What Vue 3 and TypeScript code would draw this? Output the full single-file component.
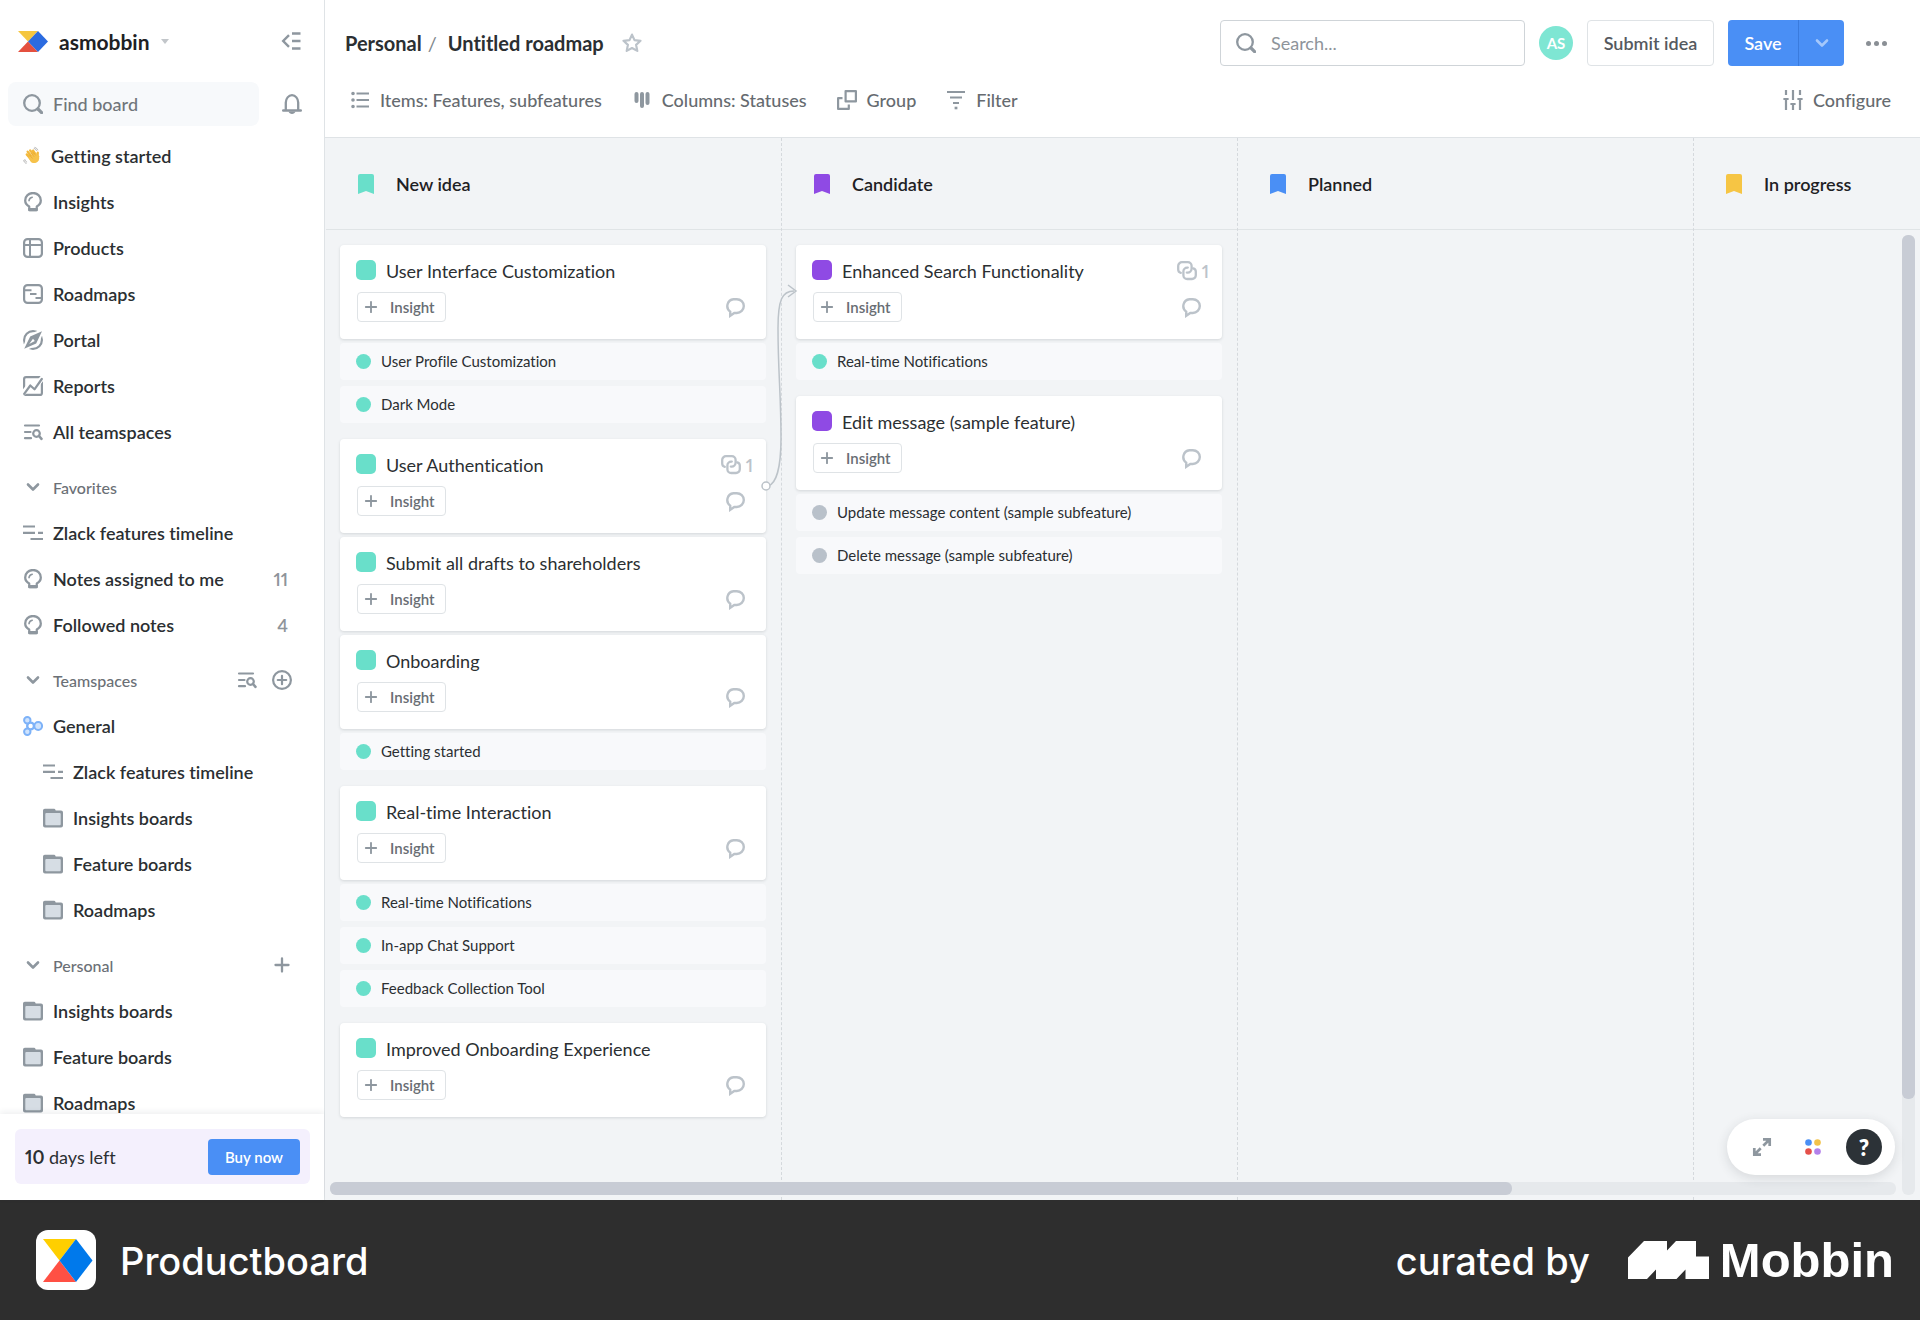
<script setup lang="ts">
interface NavItem {
  label: string
  icon: string
  count?: number
  nested?: boolean
}

interface NavSection {
  title: string
  items: NavItem[]
  actions: { icon: string; label: string }[]
}

interface Feature {
  title: string
  links?: number
  subs: { title: string; tone: string }[]
}

interface Column {
  name: string
  tone: string
  features: Feature[]
}

const mainNav: NavItem[] = [
  { label: 'Getting started', icon: 'wave' },
  { label: 'Insights', icon: 'bulb' },
  { label: 'Products', icon: 'products' },
  { label: 'Roadmaps', icon: 'roadmap' },
  { label: 'Portal', icon: 'portal' },
  { label: 'Reports', icon: 'reports' },
  { label: 'All teamspaces', icon: 'list-search' },
]

const sections: NavSection[] = [
  {
    title: 'Favorites',
    actions: [],
    items: [
      { label: 'Zlack features timeline', icon: 'timeline' },
      { label: 'Notes assigned to me', icon: 'bulb', count: 11 },
      { label: 'Followed notes', icon: 'bulb', count: 4 },
    ],
  },
  {
    title: 'Teamspaces',
    actions: [
      { icon: 'list-search', label: 'Browse teamspaces' },
      { icon: 'plus-circle', label: 'Add teamspace' },
    ],
    items: [
      { label: 'General', icon: 'general' },
      { label: 'Zlack features timeline', icon: 'timeline', nested: true },
      { label: 'Insights boards', icon: 'folder', nested: true },
      { label: 'Feature boards', icon: 'folder', nested: true },
      { label: 'Roadmaps', icon: 'folder', nested: true },
    ],
  },
  {
    title: 'Personal',
    actions: [{ icon: 'plus', label: 'Add board' }],
    items: [
      { label: 'Insights boards', icon: 'folder' },
      { label: 'Feature boards', icon: 'folder' },
      { label: 'Roadmaps', icon: 'folder' },
    ],
  },
]

const tools = [
  { label: 'Items: Features, subfeatures', icon: 'items' },
  { label: 'Columns: Statuses', icon: 'columns' },
  { label: 'Group', icon: 'group' },
  { label: 'Filter', icon: 'filter' },
]

const columns: Column[] = [
  {
    name: 'New idea',
    tone: 'teal',
    features: [
      {
        title: 'User Interface Customization',
        subs: [
          { title: 'User Profile Customization', tone: 'teal' },
          { title: 'Dark Mode', tone: 'teal' },
        ],
      },
      { title: 'User Authentication', links: 1, subs: [] },
      { title: 'Submit all drafts to shareholders', subs: [] },
      { title: 'Onboarding', subs: [{ title: 'Getting started', tone: 'teal' }] },
      {
        title: 'Real-time Interaction',
        subs: [
          { title: 'Real-time Notifications', tone: 'teal' },
          { title: 'In-app Chat Support', tone: 'teal' },
          { title: 'Feedback Collection Tool', tone: 'teal' },
        ],
      },
      { title: 'Improved Onboarding Experience', subs: [] },
    ],
  },
  {
    name: 'Candidate',
    tone: 'purple',
    features: [
      {
        title: 'Enhanced Search Functionality',
        links: 1,
        subs: [{ title: 'Real-time Notifications', tone: 'teal' }],
      },
      {
        title: 'Edit message (sample feature)',
        subs: [
          { title: 'Update message content (sample subfeature)', tone: 'grey' },
          { title: 'Delete message (sample subfeature)', tone: 'grey' },
        ],
      },
    ],
  },
  { name: 'Planned', tone: 'blue', features: [] },
  { name: 'In progress', tone: 'yellow', features: [] },
]
</script>

<template>
  <svg class="sprite" aria-hidden="true">
    <symbol id="i-wave" viewBox="0 0 20 20">
      <g fill="none" stroke="#f3b93c" stroke-width="2.6" stroke-linecap="round">
        <path d="M4.2 8.2l5 6M5.2 5.3l6 7.2M8 3.8l5.2 6.6M11.2 4l4 6" />
        <path d="M16.4 6.4c-.3 1.6-.4 3 .2 4.6" />
      </g>
      <path d="M5.8 11.6L14.6 7l3.2 3.4c.8 3.6-.6 6-3.2 7-2.6.9-4.8.4-6.2-1.4z" fill="#f6c24a" />
      <path d="M7 8.6l3.6 4.2M9 6.8l3.4 4M11.4 6l2.8 3.4" stroke="#dc9a2a" stroke-width=".6" fill="none" />
      <path d="M12 1.600c1.600.3 2.600 1.200 3 2.600M12.800.4c1.900.4 3.200 1.600 3.700 3.300M2 13.600c.2 1.600 1 2.700 2.500 3.200M.8 14.600c.3 1.900 1.300 3.100 3 3.700" stroke="#a9a9a9" stroke-width="1" fill="none" />
    </symbol>
    <symbol id="i-bulb" viewBox="0 0 20 20">
      <path d="M6.200 18.200v-3.700C3.700 13 2.200 10.800 2.200 8.400a7.800 7.400 0 0 1 15.600 0c0 2.400-1.500 4.600-4 6.100v3.700z" fill="none" stroke="currentColor" stroke-width="2.300" stroke-linejoin="round" />
      <path d="M6.400 17.600h7.200" stroke="currentColor" stroke-width="3.200" />
      <path d="M6 8.600a4 4 0 0 1 3.200-3.400" fill="none" stroke="currentColor" stroke-width="1.600" stroke-linecap="round" />
    </symbol>
    <symbol id="i-products" viewBox="0 0 20 20">
      <rect x="1.100" y="1.100" width="17.800" height="17.800" rx="3.500" fill="none" stroke="currentColor" stroke-width="2.200" />
      <path d="M1 7h18M7 1v18" stroke="currentColor" stroke-width="2" />
    </symbol>
    <symbol id="i-roadmap" viewBox="0 0 20 20">
      <rect x="1.100" y="1.100" width="17.800" height="17.800" rx="3.500" fill="none" stroke="currentColor" stroke-width="2.200" />
      <path d="M1 6.200h7.500M7 10h6.500M12.500 14H19" stroke="currentColor" stroke-width="2" />
    </symbol>
    <symbol id="i-portal" viewBox="0 0 20 20">
      <circle cx="10" cy="10" r="8.900" fill="none" stroke="currentColor" stroke-width="2.200" />
      <path d="M19.500.5L6 6 .5 19.500 14 14z" fill="#fff" stroke="#fff" stroke-width="3" />
      <path fill-rule="evenodd" d="M19 1.200L7.200 6.500 1.200 18.800 13.200 13.600zM10 8.800l1.800 2.300-5.600 3z" fill="currentColor" />
    </symbol>
    <symbol id="i-reports" viewBox="0 0 20 20">
      <rect x="1.100" y="1.100" width="17.800" height="17.800" rx="2" fill="none" stroke="currentColor" stroke-width="2.200" />
      <path d="M-.5 18L7.500 8l3.800 4L20.500.5" fill="none" stroke="#fff" stroke-width="5" />
      <path d="M1.200 17.800L7.300 9.500l4.200 3.800L18.800 3" fill="none" stroke="currentColor" stroke-width="2.200" stroke-linecap="round" stroke-linejoin="round" />
    </symbol>
    <symbol id="i-list-search" viewBox="0 0 20 20">
      <path d="M2 3.500h14M2 10h5.500M2 16.200h6" stroke="currentColor" stroke-width="2.200" stroke-linecap="round" />
      <circle cx="13.500" cy="11.500" r="3.300" fill="none" stroke="currentColor" stroke-width="2.200" />
      <path d="M16 14l2.500 2.800" stroke="currentColor" stroke-width="2.600" stroke-linecap="round" />
    </symbol>
    <symbol id="i-timeline" viewBox="0 0 20 20">
      <path d="M0 3.500h12M0 9.800h12M15 9.800h5M7.500 16H20" stroke="currentColor" stroke-width="2.200" />
    </symbol>
    <symbol id="i-folder" viewBox="0 0 20 20">
      <path d="M0 2.500A1.800 1.800 0 0 1 1.800.7h8.900c.9 0 1.300.3 1.700 1.100l.3.700H18a2 2 0 0 1 2 2v13a2 2 0 0 1-2 2H2a2 2 0 0 1-2-2z" fill="currentColor" />
      <rect x="2.300" y="5" width="15.400" height="12.200" rx="1" fill="#d6dde4" />
    </symbol>
    <symbol id="i-general" viewBox="0 0 20 20">
      <g fill="#cfe3fd" stroke="#7db2f8" stroke-width="2">
        <circle cx="7.600" cy="10" r="3.400" fill="#fff" stroke-width="2.400" />
        <circle cx="4.300" cy="4.200" r="3.200" />
        <circle cx="4.300" cy="15.800" r="3.200" />
        <circle cx="15.200" cy="10" r="3.900" />
      </g>
    </symbol>
    <symbol id="i-plus-circle" viewBox="0 0 20 20">
      <circle cx="10" cy="10" r="8.900" fill="none" stroke="currentColor" stroke-width="2.200" />
      <path d="M10 5.800v8.400M5.800 10h8.400" stroke="currentColor" stroke-width="2.200" stroke-linecap="round" />
    </symbol>
    <symbol id="i-plus" viewBox="0 0 20 20">
      <path d="M10 3.500v13M3.500 10h13" stroke="currentColor" stroke-width="2.300" stroke-linecap="round" />
    </symbol>
    <symbol id="i-chevron" viewBox="0 0 20 20">
      <path d="M5 7.500l5 5 5-5" fill="none" stroke="currentColor" stroke-width="2.600" stroke-linecap="round" stroke-linejoin="round" />
    </symbol>
    <symbol id="i-search" viewBox="0 0 20 20">
      <circle cx="9" cy="9" r="7.800" fill="none" stroke="currentColor" stroke-width="2.300" />
      <path d="M15 15l3.600 3.600" stroke="currentColor" stroke-width="3.200" stroke-linecap="round" />
    </symbol>
    <symbol id="i-bell" viewBox="0 0 20 20">
      <path d="M3.800 16V8.600a6.200 7.400 0 0 1 12.400 0V16" fill="none" stroke="currentColor" stroke-width="2.300" />
      <path d="M1.200 16.500h17.600" stroke="currentColor" stroke-width="2.400" stroke-linecap="round" />
      <path d="M6.500 17.500h7c-.5 1.600-1.800 2.500-3.500 2.500s-3-.9-3.500-2.500z" fill="currentColor" />
    </symbol>
    <symbol id="i-collapse" viewBox="0 0 20 20">
      <path d="M11 2.500h8.500M11 10h8.500M11 17.500h8.500" stroke="currentColor" stroke-width="2.300" />
      <path d="M8 4.200L2.200 10 8 15.800" fill="none" stroke="currentColor" stroke-width="2.400" />
    </symbol>
    <symbol id="i-star" viewBox="0 0 20 20">
      <path d="M10 1.600l2.500 5.500 6 .7-4.400 4.100 1.200 6L10 15l-5.300 2.900 1.200-6L1.500 7.800l6-.7z" fill="none" stroke="currentColor" stroke-width="2.200" stroke-linejoin="round" />
    </symbol>
    <symbol id="i-items" viewBox="0 0 20 20">
      <path d="M6.500 3.500H19M6.500 10H19M6.500 16.500H19" stroke="currentColor" stroke-width="2.200" />
      <path d="M3 3.500h.01M3 10h.01M3 16.500h.01" stroke="currentColor" stroke-width="3.600" stroke-linecap="round" />
    </symbol>
    <symbol id="i-columns" viewBox="0 0 20 20">
      <path d="M4.500 4v7M10 4v12M15.500 4v9" stroke="currentColor" stroke-width="4" stroke-linecap="round" />
    </symbol>
    <symbol id="i-group" viewBox="0 0 20 20">
      <path d="M8.600 1.100h10.300v10.300H8.600zM5.500 8.200H1.100v10.700h10.700v-4.400" fill="none" stroke="currentColor" stroke-width="2.200" stroke-linejoin="round" />
    </symbol>
    <symbol id="i-filter" viewBox="0 0 20 20">
      <path d="M1 2h18M4 7.500h12M7 13h6" stroke="currentColor" stroke-width="2.200" />
      <path d="M8.600 18h2.800" stroke="currentColor" stroke-width="2.600" />
    </symbol>
    <symbol id="i-configure" viewBox="0 0 20 20">
      <path d="M3 0v5M10 0v10M17 0v5M3 9v11M10 14v6M17 9v11" stroke="currentColor" stroke-width="2.200" />
      <path d="M.4 9h5.200M7.400 14h5.200M14.400 9h5.200" stroke="currentColor" stroke-width="2.200" />
    </symbol>
    <symbol id="i-comment" viewBox="0 0 20 20">
      <path d="M8.500 1.200h3.300a7 6.900 0 0 1 0 13.800H9.300L5.200 17.800v-4.200A7 6.900 0 0 1 8.500 1.200z" fill="none" stroke="currentColor" stroke-width="2.400" stroke-linejoin="miter" />
    </symbol>
    <symbol id="i-link" viewBox="0 0 20 20">
      <g fill="none" stroke="currentColor" stroke-width="2.300" stroke-linecap="round">
        <path d="M3.800 11.800A3.400 3.400 0 0 1 1.200 8.500V5A3.800 3.800 0 0 1 5 1.200h5.800A3.800 3.800 0 0 1 14.600 5v2.600a4 4 0 0 1-4 4H9.800" />
        <path d="M16.200 7.300A3.400 3.400 0 0 1 18.800 10.600v3.600A3.800 3.800 0 0 1 15 18h-4.800a3.800 3.800 0 0 1-3.800-3.800v-3.800a3.800 3.800 0 0 1 3.800-3.800h.6" />
      </g>
    </symbol>
    <symbol id="i-expand" viewBox="0 0 20 20">
      <path d="M11 2.300h6.700V9M17.500 2.500l-6.200 6.200M9 17.700H2.300V11M2.500 17.500l6.200-6.200" fill="none" stroke="currentColor" stroke-width="2.700" />
    </symbol>
  </svg>

  <div class="page">
    <div class="shell">
      <aside class="sidebar">
        <div class="workspace">
          <button class="workspace-name" type="button">
            <svg class="logo" viewBox="0 0 30 21" aria-hidden="true">
              <path d="M0 0h20L10 10.500z" fill="#f5c63f" />
              <path d="M0 21h20L10 10.500z" fill="#e4503f" />
              <path d="M20 0l10 10.500L20 21 10 10.500z" fill="#2b6be0" />
            </svg>
            <span>asmobbin</span>
            <i class="caret"></i>
          </button>
          <button class="icon-btn" type="button" aria-label="Collapse sidebar">
            <svg class="icon"><use href="#i-collapse" /></svg>
          </button>
        </div>

        <div class="find-row">
          <label class="find">
            <svg class="icon"><use href="#i-search" /></svg>
            <input type="text" placeholder="Find board" aria-label="Find board" />
          </label>
          <button class="icon-btn" type="button" aria-label="Notifications">
            <svg class="icon"><use href="#i-bell" /></svg>
          </button>
        </div>

        <nav class="nav">
          <a v-for="item in mainNav" :key="item.label" class="nav-item" href="#">
            <svg class="icon" :class="{ emoji: item.icon === 'wave' }"><use :href="'#i-' + item.icon" /></svg>
            <span>{{ item.label }}</span>
          </a>
          <section v-for="section in sections" :key="section.title" class="nav-section">
            <header class="nav-head">
              <svg class="icon"><use href="#i-chevron" /></svg>
              <h2>{{ section.title }}</h2>
              <button v-for="action in section.actions" :key="action.icon" class="icon-btn" type="button" :aria-label="action.label">
                <svg class="icon"><use :href="'#i-' + action.icon" /></svg>
              </button>
            </header>
            <a v-for="item in section.items" :key="item.label" class="nav-item" :class="{ nested: item.nested }" href="#">
              <svg class="icon"><use :href="'#i-' + item.icon" /></svg>
              <span>{{ item.label }}</span>
              <span v-if="item.count" class="count">{{ item.count }}</span>
            </a>
          </section>
        </nav>

        <div class="trial">
          <div class="trial-box">
            <span><strong>10</strong> days left</span>
            <button class="buy" type="button">Buy now</button>
          </div>
        </div>
      </aside>

      <main class="main">
        <header class="top">
          <div class="title-row">
            <h1 class="crumbs">
              <a href="#">Personal</a><span class="slash">/</span><span>Untitled roadmap</span>
            </h1>
            <button class="icon-btn star" type="button" aria-label="Add to favorites">
              <svg class="icon"><use href="#i-star" /></svg>
            </button>
            <label class="search">
              <svg class="icon"><use href="#i-search" /></svg>
              <input type="text" placeholder="Search..." aria-label="Search" />
            </label>
            <span class="avatar">AS</span>
            <button class="submit" type="button">Submit idea</button>
            <div class="save">
              <button type="button">Save</button>
              <button class="save-more" type="button" aria-label="More save options">
                <svg class="icon"><use href="#i-chevron" /></svg>
              </button>
            </div>
            <button class="more" type="button" aria-label="More"><i></i><i></i><i></i></button>
          </div>
          <div class="tool-row">
            <button v-for="tool in tools" :key="tool.icon" class="tool" type="button">
              <svg class="icon"><use :href="'#i-' + tool.icon" /></svg>
              <span>{{ tool.label }}</span>
            </button>
            <button class="tool configure" type="button">
              <svg class="icon"><use href="#i-configure" /></svg>
              <span>Configure</span>
            </button>
          </div>
        </header>

        <div class="board">
          <section v-for="column in columns" :key="column.name" class="column">
            <header class="column-head">
              <svg class="flag" :class="column.tone" viewBox="0 0 16 20" aria-hidden="true">
                <path d="M2 0h12a2 2 0 0 1 2 2v18l-8-3-8 3V2a2 2 0 0 1 2-2z" fill="currentColor" />
              </svg>
              <h2>{{ column.name }}</h2>
            </header>
            <div class="cards">
              <div v-for="feature in column.features" :key="feature.title" class="group" :class="{ 'has-subs': feature.subs.length }">
                <article class="card">
                  <div class="card-top">
                    <i class="swatch" :class="column.tone"></i>
                    <h3>{{ feature.title }}</h3>
                    <span v-if="feature.links" class="links">
                      <svg class="icon"><use href="#i-link" /></svg>{{ feature.links }}
                    </span>
                  </div>
                  <div class="card-bottom">
                    <button class="insight" type="button">
                      <svg class="icon"><use href="#i-plus" /></svg>
                      <span>Insight</span>
                    </button>
                    <button class="icon-btn comment" type="button" aria-label="Comments">
                      <svg class="icon"><use href="#i-comment" /></svg>
                    </button>
                  </div>
                </article>
                <ul v-if="feature.subs.length" class="subs">
                  <li v-for="sub in feature.subs" :key="sub.title">
                    <i class="dot" :class="sub.tone"></i>
                    <span>{{ sub.title }}</span>
                  </li>
                </ul>
              </div>
            </div>
          </section>

          <svg class="connector" viewBox="0 0 48 216" fill="none" stroke="#bcc3c9" aria-hidden="true">
            <path d="M13 207c8-2 13-18 13-48 0-44-3-66-3-110 0-28 4-37 16-37" stroke-width="1.500" />
            <path d="M33 6l8 6-8 6" stroke-width="1.500" />
            <circle cx="11" cy="207" r="4" fill="#fff" stroke-width="1.500" />
          </svg>

          <div class="bar bar-y"><i></i></div>
          <div class="bar bar-x"><i></i></div>

          <div class="dock">
            <button class="icon-btn" type="button" aria-label="Full screen">
              <svg class="icon"><use href="#i-expand" /></svg>
            </button>
            <button class="icon-btn colors" type="button" aria-label="Color palette">
              <svg class="palette" viewBox="0 0 16 16">
                <circle cx="3.500" cy="3.500" r="3.300" fill="#4a8ff5" />
                <circle cx="12.500" cy="3.500" r="3.300" fill="#f2c24a" />
                <circle cx="3.500" cy="12.500" r="3.300" fill="#e5504a" />
                <circle cx="12.500" cy="12.500" r="3.300" fill="#b381ea" />
              </svg>
            </button>
            <button class="help" type="button" aria-label="Help">?</button>
          </div>
        </div>
      </main>
    </div>

    <footer class="credit">
      <svg class="app-logo" viewBox="0 0 60 60" aria-hidden="true">
        <rect width="60" height="60" rx="12" fill="#fff" />
        <path d="M7 9h33L23.500 30.500z" fill="#ffcf00" />
        <path d="M7 52h33L23.500 30.500z" fill="#ff5044" />
        <path d="M40 9l16.500 21.500L40 52 23.500 30.500z" fill="#0079eb" />
      </svg>
      <span class="app-name">Productboard</span>
      <span class="by">curated by</span>
      <svg class="mobbin-mark" viewBox="0 0 81 38" aria-hidden="true">
        <path d="M0 16.500L16 0h23v9.500L48 0h20v15.500h13V38H57.500V28.500L48.500 38H28V28.500L19 38H0z" fill="#fff" />
      </svg>
      <span class="mobbin">Mobbin</span>
    </footer>
  </div>
</template>

<style>
body {
  margin: 0;
  background: #2e2e2e;
}
</style>

<style scoped>
* {
  box-sizing: border-box;
}
.sprite {
  position: absolute;
  width: 0;
  height: 0;
}
.page {
  display: flex;
  flex-direction: column;
  height: 100vh;
  font-family: Lato, 'Liberation Sans', sans-serif;
  font-size: 18px;
  font-variant-ligatures: none;
  font-variant-numeric: proportional-nums;
  color: #2b2f32;
}
.shell {
  display: flex;
  flex: 1;
  min-height: 0;
  background: #fff;
}
h1,
h2,
h3,
ul {
  margin: 0;
  padding: 0;
  list-style: none;
  font-size: inherit;
  font-weight: inherit;
}
a {
  color: inherit;
  text-decoration: none;
}
button {
  margin: 0;
  padding: 0;
  border: 0;
  background: none;
  font: inherit;
  font-variant: inherit;
  color: inherit;
  white-space: nowrap;
}
input {
  flex: 1;
  min-width: 0;
  padding: 0;
  border: 0;
  outline: 0;
  background: none;
  font: inherit;
}
.icon {
  display: block;
  flex: none;
  width: 20px;
  height: 20px;
  color: #8e979f;
}
.icon-btn {
  flex: none;
}

/* sidebar */
.sidebar {
  display: flex;
  flex-direction: column;
  flex: none;
  width: 325px;
  border-right: 1px solid #dfe3e6;
}
.workspace {
  display: flex;
  align-items: center;
  justify-content: space-between;
  height: 82px;
  padding: 0 23px 0 18px;
}
.workspace-name {
  display: flex;
  align-items: center;
  gap: 11px;
  font-size: 21px;
  font-weight: 700;
  color: #1e2124;
}
.logo {
  width: 30px;
  height: 21px;
}
.caret {
  border: 4px solid transparent;
  border-top: 5px solid #c2c6ca;
  border-bottom: 0;
}
.find-row {
  display: flex;
  align-items: center;
  gap: 23px;
  padding: 0 22px 0 8px;
}
.find {
  display: flex;
  flex: 1;
  align-items: center;
  gap: 10px;
  height: 44px;
  min-width: 0;
  padding: 0 15px;
  border-radius: 8px;
  background: #f7f9fb;
  font-weight: 500;
}
.find input::placeholder {
  color: #70757a;
}
.nav {
  flex: 1;
  min-height: 0;
  padding-top: 7px;
  overflow: hidden;
}
.nav-item,
.nav-head {
  display: flex;
  align-items: center;
  gap: 10px;
  height: 46px;
  padding: 0 36px 0 23px;
}
.nav-item {
  font-weight: 600;
}
.nested {
  padding-left: 43px;
}
.emoji {
  width: 18px;
}
.count {
  margin-left: auto;
  color: #8e949a;
}
.nav-section {
  padding-top: 9px;
}
.nav-head {
  padding-right: 32px;
  font-size: 16px;
  font-weight: 500;
  color: #6b7076;
}
.nav-head h2 {
  flex: 1;
}
.nav-head .icon-btn + .icon-btn {
  margin-left: 5px;
}
.trial {
  position: relative;
  padding: 15px 14px 16px 15px;
  background: #fff;
  box-shadow: 0 -2px 6px rgba(40, 50, 60, 0.08);
}
.trial-box {
  display: flex;
  align-items: center;
  justify-content: space-between;
  height: 55px;
  padding: 0 10px;
  border-radius: 6px;
  background: #f4f0fd;
}
.buy {
  height: 36px;
  width: 92px;
  border-radius: 4px;
  background: #4a8ff5;
  color: #fff;
  font-size: 15px;
  font-weight: 600;
}

/* header */
.main {
  display: flex;
  flex-direction: column;
  flex: 1;
  min-width: 0;
}
.top {
  height: 138px;
  padding: 20px 29px 0 20px;
  border-bottom: 1px solid #dfe3e6;
}
.title-row {
  display: flex;
  align-items: center;
  height: 46px;
  padding-right: 4px;
}
.crumbs {
  font-size: 20px;
  font-weight: 700;
  white-space: nowrap;
}
.slash {
  margin: 0 11px 0 6px;
  font-weight: 400;
  color: #80868c;
}
.star {
  margin: 0 auto 0 18px;
}
.star .icon {
  color: #bcc3ca;
}
.search {
  display: flex;
  align-items: center;
  gap: 15px;
  width: 305px;
  height: 46px;
  padding: 0 15px;
  border: 1px solid #cfd4d8;
  border-radius: 4px;
}
.search input::placeholder {
  color: #8e949a;
}
.avatar {
  width: 34px;
  height: 34px;
  margin: 0 14px;
  border-radius: 50%;
  background: #7ee6d3;
  color: #fff;
  font-size: 15px;
  font-weight: 700;
  line-height: 34px;
  text-align: center;
}
.submit {
  width: 127px;
  height: 46px;
  border: 1px solid #dfe3e6;
  border-radius: 4px;
  font-weight: 600;
  color: #55595e;
}
.save {
  display: flex;
  height: 46px;
  margin: 0 22px 0 14px;
  border-radius: 4px;
  background: #4a8ff5;
  color: #fff;
  font-weight: 600;
}
.save button {
  width: 70px;
}
.save .save-more {
  display: flex;
  align-items: center;
  justify-content: center;
  width: 46px;
  border-left: 1px solid #3a7bdd;
}
.save .icon {
  color: #a5c8fb;
}
.more {
  display: flex;
  gap: 3px;
}
.more i {
  width: 5px;
  height: 5px;
  border-radius: 50%;
  background: #8a8f95;
}
.tool-row {
  display: flex;
  align-items: center;
  gap: 30px;
  height: 68px;
  padding-left: 5px;
}
.tool {
  display: flex;
  align-items: center;
  gap: 10px;
  font-weight: 500;
  color: #666b70;
}
.configure {
  margin-left: auto;
}

/* board */
.board {
  position: relative;
  display: flex;
  flex: 1;
  min-height: 0;
  overflow: hidden;
  background: #f2f4f6;
}
.column {
  flex: none;
  width: 456px;
  border-left: 1px dashed #d5d9dd;
}
.column:first-child {
  border-left-color: transparent;
}
.column-head {
  display: flex;
  align-items: center;
  gap: 22px;
  height: 92px;
  padding-left: 32px;
  border-bottom: 1px solid #e0e4e6;
  font-weight: 600;
  color: #1e2124;
}
.flag {
  width: 16px;
  height: 20px;
}
.teal {
  color: #69dfca;
}
.purple {
  color: #8f4ae4;
}
.blue {
  color: #4a8ff5;
}
.yellow {
  color: #f6c544;
}
.grey {
  color: #b9c1ca;
}
.cards {
  padding: 15px 15px 0 14px;
}
.group {
  margin-bottom: 4px;
}
.has-subs {
  margin-bottom: 16px;
}
.card {
  height: 94px;
  padding: 15px 13px 15px 16px;
  border-radius: 4px;
  background: #fff;
  box-shadow: 0 1px 3px rgba(50, 60, 70, 0.16);
}
.card-top {
  display: flex;
  align-items: flex-start;
  gap: 10px;
  height: 22px;
  line-height: 22px;
}
.swatch {
  width: 20px;
  height: 20px;
  border-radius: 5px;
  background: currentColor;
}
.links {
  display: flex;
  align-items: center;
  gap: 5px;
  margin-left: auto;
  font-weight: 600;
  color: #bcc3ca;
}
.links .icon,
.comment .icon {
  color: #bcc3ca;
}
.card-bottom {
  display: flex;
  align-items: center;
  justify-content: space-between;
  margin-top: 10px;
  padding: 0 8px 0 1px;
}
.comment {
  padding-top: 2px;
}
.insight {
  display: flex;
  align-items: center;
  gap: 11px;
  height: 30px;
  width: 89px;
  padding-left: 5px;
  border: 1px solid #dfe3e6;
  border-radius: 4px;
  font-size: 15px;
  font-weight: 600;
  color: #686d73;
}
.insight .icon {
  width: 16px;
}
.subs {
  display: flex;
  flex-direction: column;
  gap: 6px;
  margin-top: 4px;
}
.subs li {
  display: flex;
  align-items: center;
  gap: 10px;
  height: 37px;
  padding-left: 16px;
  border-radius: 4px;
  background: #f8f9fb;
  font-size: 15px;
}
.subs span {
  padding-bottom: 2px;
}
.dot {
  width: 15px;
  height: 15px;
  border-radius: 50%;
  background: currentColor;
}
.connector {
  position: absolute;
  left: 430px;
  top: 141px;
  width: 48px;
  height: 216px;
}
.bar {
  position: absolute;
  border-radius: 6px;
  background: #e6e9ec;
}
.bar i {
  display: block;
  border-radius: 6px;
  background: #c8ccd5;
}
.bar-y {
  top: 97px;
  right: 5px;
  bottom: 5px;
  width: 13px;
}
.bar-y i {
  height: 90%;
}
.bar-x {
  left: 5px;
  right: 24px;
  bottom: 5px;
  height: 13px;
}
.bar-x i {
  width: 75.5%;
  height: 100%;
}
.dock {
  position: absolute;
  right: 25px;
  bottom: 25px;
  display: flex;
  align-items: center;
  justify-content: space-between;
  width: 168px;
  height: 56px;
  padding: 0 13px 0 25px;
  border-radius: 28px;
  background: #fff;
  box-shadow: 0 3px 12px rgba(40, 50, 60, 0.14);
}
.colors {
  margin-left: 8px;
}
.palette {
  display: block;
  width: 16px;
  height: 16px;
}
.help {
  width: 36px;
  height: 36px;
  border-radius: 50%;
  background: #2c3237;
  color: #fff;
  font-size: 22px;
  font-weight: 800;
}

/* credit bar */
.credit {
  display: flex;
  flex: none;
  align-items: center;
  height: 120px;
  padding: 0 26px 0 36px;
  background: #2e2e2e;
  color: #fff;
  font-family: Inter, 'Liberation Sans', sans-serif;
}
.app-logo {
  width: 60px;
  height: 60px;
  margin-right: 24px;
}
.app-name,
.by {
  padding-top: 2px;
  font-size: 38px;
  font-weight: 500;
}
.by {
  margin: 0 38px 0 auto;
}
.mobbin-mark {
  width: 81px;
  height: 38px;
  margin-right: 11px;
}
.mobbin {
  font-family: 'Liberation Sans', sans-serif;
  font-size: 49px;
  font-weight: 700;
}
</style>
